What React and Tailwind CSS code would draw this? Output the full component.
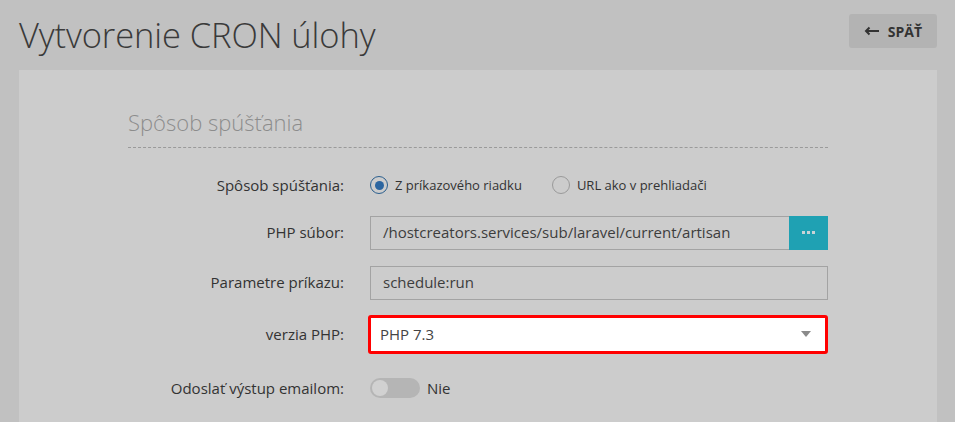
import React from "react";

const Row = ({ label, children, className = "" }) => (
  <div className={`flex items-center ${className}`}>
    <label className="w-[216px] shrink-0 text-right text-[15px] text-[#333333] pr-0">
      {label}
    </label>
    <div className="ml-[26px] w-[458px] flex items-center">{children}</div>
  </div>
);

const App = () => {
  return (
    <div className="w-full min-h-screen bg-[#c1c1c1] font-['Open_Sans',sans-serif] overflow-hidden">
      {/* Header */}
      <div className="flex items-start justify-between pl-[19px] pr-[18px] h-[70px]">
        <h1 className="text-[34.5px] font-light text-[#3a3a3a] leading-none mt-[18px] tracking-[-0.1px]">
          Vytvorenie CRON úlohy
        </h1>
        <button className="mt-[14px] h-[34px] w-[88px] rounded-[3px] bg-[#b3b3b3] flex items-center justify-center gap-[9px] text-[14px] font-bold text-[#333333]">
          <svg width="15" height="10" viewBox="0 0 15 10" fill="none">
            <path d="M15 5H2.5M5.5 1.5L2 5l3.5 3.5" stroke="#333333" strokeWidth="2" />
          </svg>
          <span>SPÄŤ</span>
        </button>
      </div>

      {/* Panel */}
      <div className="ml-[19px] mr-[18px] bg-[#cccccc] h-[352px] pt-[41px]">
        <div className="w-[700px] mx-auto">
          <h2 className="text-[22px] font-light text-[#8c8c8c] leading-none pb-[14px] border-b border-dashed border-[#9a9a9a]">
            Spôsob spúšťania
          </h2>

          <div className="mt-[26px] flex flex-col">
            <Row label="Spôsob spúšťania:">
              <div className="flex items-center gap-[7px]">
                <span className="w-[18px] h-[18px] rounded-full border-[1.5px] border-[#2b5f8e] flex items-center justify-center">
                  <span className="w-[9px] h-[9px] rounded-full bg-[#2b65a0]" />
                </span>
                <span className="text-[13px] text-[#333333]">Z príkazového riadku</span>
              </div>
              <div className="flex items-center gap-[7px] ml-[30px]">
                <span className="w-[18px] h-[18px] rounded-full border border-[#9a9a9a]" />
                <span className="text-[13px] text-[#333333]">URL ako v prehliadači</span>
              </div>
            </Row>

            <Row label="PHP súbor:" className="mt-[19px]">
              <div className="flex-1 h-[34px] border border-[#a3a3a3] border-r-0 flex items-center px-[12px] text-[15px] text-[#3d3d3d]">
                /hostcreators.services/sub/laravel/current/artisan
              </div>
              <button className="w-[39px] h-[34px] bg-[#1fa1b3] flex items-center justify-center gap-[2px]">
                <span className="w-[3px] h-[3px] bg-[#c9d3d6]" />
                <span className="w-[3px] h-[3px] bg-[#c9d3d6]" />
                <span className="w-[3px] h-[3px] bg-[#c9d3d6]" />
              </button>
            </Row>

            <Row label="Parametre príkazu:" className="mt-[16px]">
              <div className="flex-1 h-[34px] border border-[#a3a3a3] flex items-center px-[12px] text-[15px] text-[#3d3d3d]">
                schedule:run
              </div>
            </Row>

            <Row label="verzia PHP:" className="mt-[15px]">
              <div className="-ml-[2px] w-[462px] h-[39px] border-[3px] border-[#ff0000] rounded-[3px] bg-white flex items-center justify-between pl-[9px] pr-[14px]">
                <span className="text-[15px] text-[#444444]">PHP 7.3</span>
                <span className="w-0 h-0 border-l-[5px] border-r-[5px] border-t-[6px] border-l-transparent border-r-transparent border-t-[#8a8a8a]" />
              </div>
            </Row>

            <Row label="Odoslať výstup emailom:" className="mt-[23px]">
              <div className="w-[50px] h-[20px] rounded-full bg-[#b5b5b5] flex items-center px-[2px]">
                <span className="w-[16px] h-[16px] rounded-full bg-[#d1d1d1]" />
              </div>
              <span className="ml-[7px] text-[15px] text-[#333333]">Nie</span>
            </Row>
          </div>
        </div>
      </div>
    </div>
  );
};

export default App;
